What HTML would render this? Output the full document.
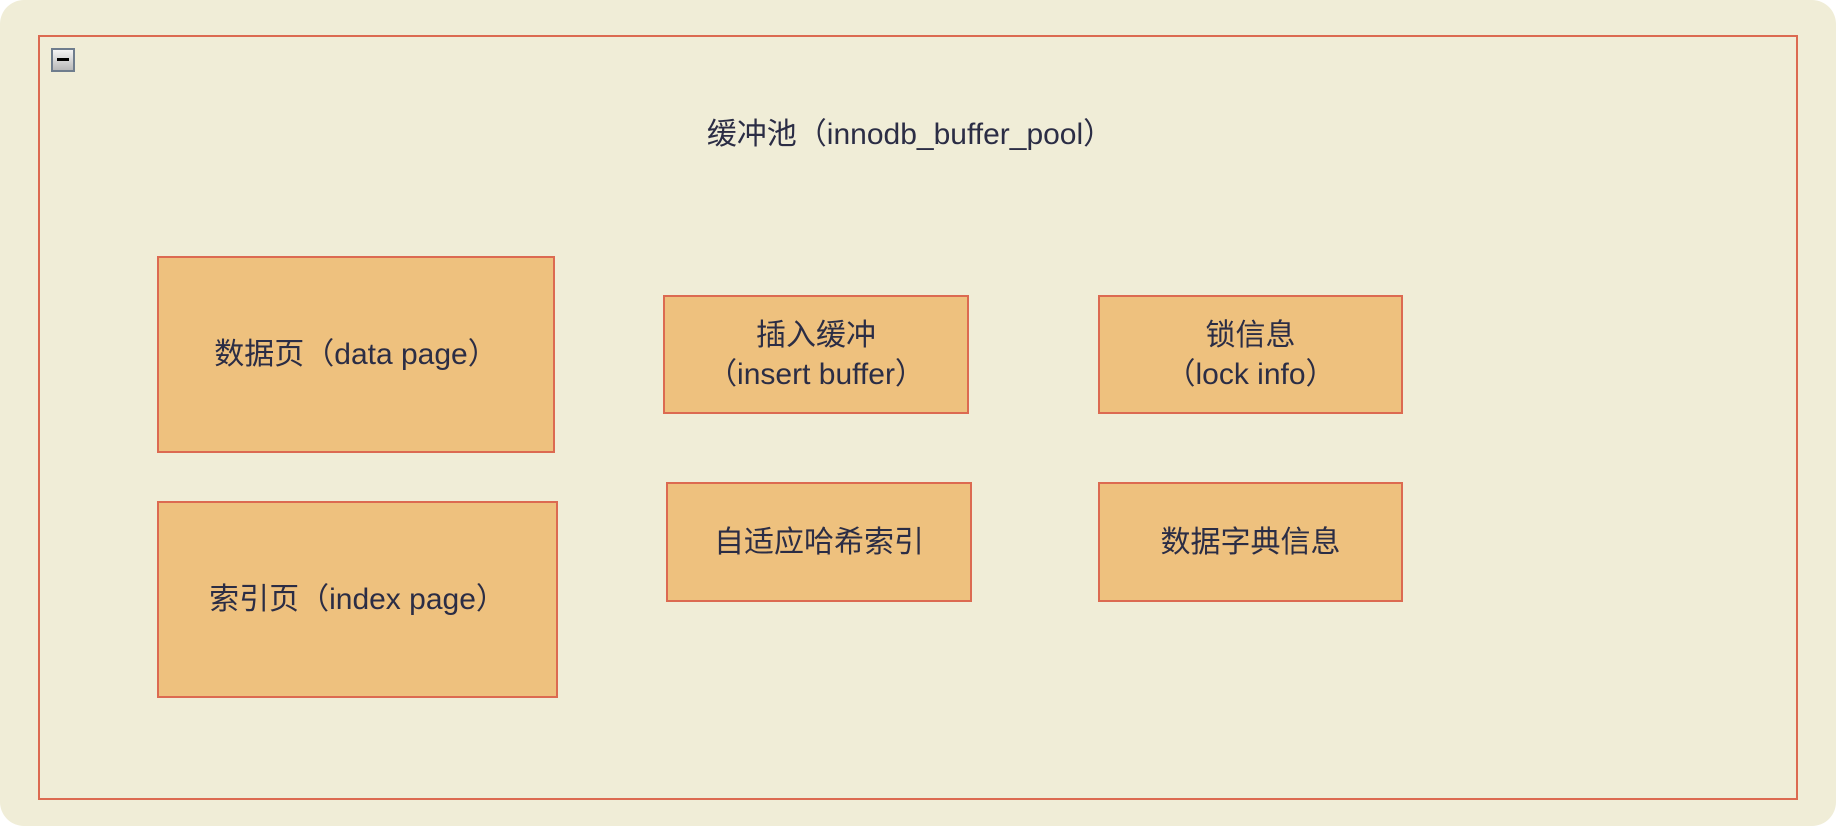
<!DOCTYPE html>
<html><head><meta charset="utf-8"><style>
html,body{margin:0;padding:0;background:#fff;}
#bg{position:absolute;left:0;top:0;width:1836px;height:826px;background:#f0edd7;border-radius:24px;overflow:hidden;font-family:"Liberation Sans","Noto Sans CJK SC",sans-serif;color:#2b2d45;}
#frame{position:absolute;left:38px;top:35px;width:1756px;height:761px;border:2px solid #dc6a51;box-sizing:content-box;}
.icon{position:absolute;left:51px;top:48px;width:20px;height:20px;border:2px solid #6f7d8d;background:linear-gradient(#f4f4f4,#b8b8b8);}
.icon:after{content:"";position:absolute;left:4px;top:8px;width:12px;height:3px;background:#000;}
.title{position:absolute;left:510px;width:800px;top:116px;text-align:center;font-size:30px;line-height:38px;}
.box{position:absolute;background:#eec17e;border:2px solid #dc6a51;box-sizing:border-box;display:flex;align-items:center;justify-content:center;text-align:center;font-size:30px;line-height:39px;}
</style></head><body>
<div id="bg">
<div id="frame"></div>
<div class="icon"></div>
<div class="title">缓冲池（innodb_buffer_pool）</div>
<div class="box" style="left:157px;top:256px;width:398px;height:197px;">数据页（data page）</div>
<div class="box" style="left:157px;top:501px;width:401px;height:197px;">索引页（index page）</div>
<div class="box" style="left:663px;top:295px;width:306px;height:119px;">插入缓冲<br>（insert buffer）</div>
<div class="box" style="left:1098px;top:295px;width:305px;height:119px;">锁信息<br>（lock info）</div>
<div class="box" style="left:666px;top:482px;width:306px;height:120px;">自适应哈希索引</div>
<div class="box" style="left:1098px;top:482px;width:305px;height:120px;">数据字典信息</div>
</div>
</body></html>
